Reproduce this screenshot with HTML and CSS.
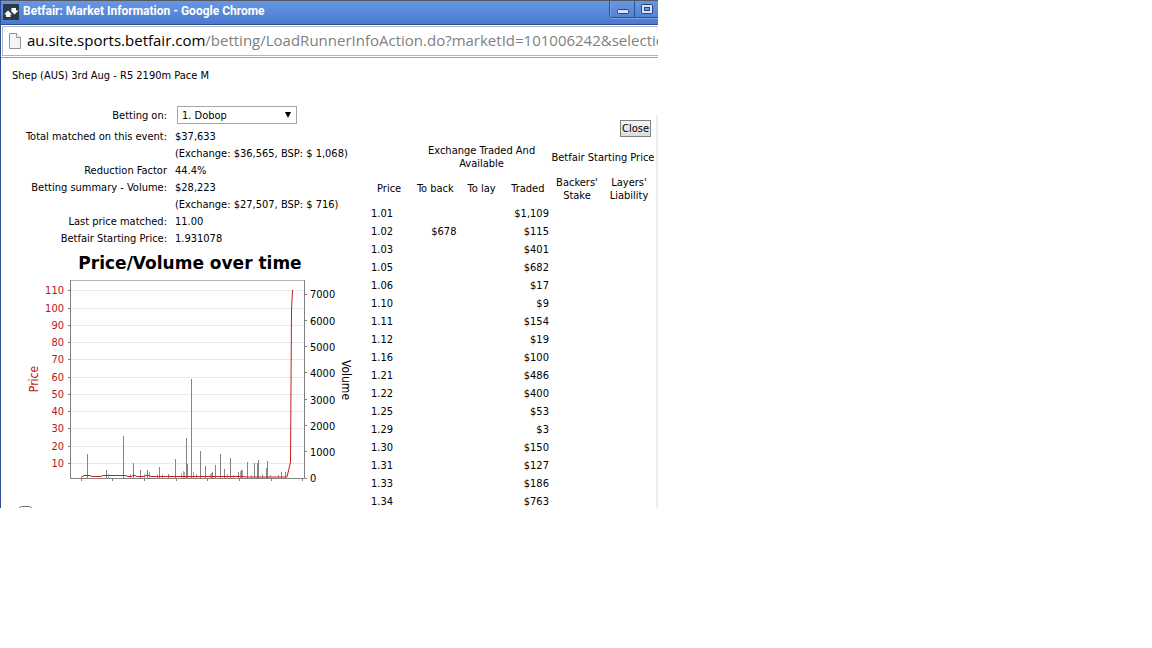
FILE: index.html
```html
<!DOCTYPE html>
<html lang="en">
<head>
<meta charset="utf-8">
<title>Betfair: Market Information</title>
<link rel="stylesheet" href="styles.css">
</head>
<body>
<div class="window">
  <header class="titlebar">
    <svg class="logo" viewBox="0 0 16 16" width="16" height="16" aria-hidden="true">
      <rect width="16" height="16" fill="#2a3a47"/>
      <path d="M1 10.500L5 6.500l4 4H7.500V13H3v-2.500z" fill="#fff"/>
      <path d="M8.500 4H13v2.500h2.500l-4 4-4-4h1z" fill="#fff"/>
    </svg>
    <h1 class="window-title">Betfair: Market Information - Google Chrome</h1>
    <div class="window-controls">
      <button class="control" type="button" aria-label="Minimise">
        <svg viewBox="0 0 12 10" width="12" height="10"><rect x=".5" y="5.5" width="11" height="4" rx="1" fill="#d5e2f8" stroke="#27457f"/></svg>
      </button>
      <button class="control" type="button" aria-label="Maximise">
        <svg viewBox="0 0 12 10" width="12" height="10"><rect x=".5" y=".5" width="11" height="9" rx="1" fill="#d5e2f8" stroke="#27457f"/><rect x="3.5" y="3.5" width="5" height="3" fill="#6c98e0" stroke="#27457f"/></svg>
      </button>
    </div>
  </header>
  <div class="addressbar">
    <svg class="page-icon" viewBox="0 0 12 16" width="12" height="16" aria-hidden="true">
      <path d="M.5.5h7l4 4v11H.5z" fill="#f5f5f5" stroke="#949494"/><path d="M7.500.5v4h4" fill="#fff" stroke="#949494"/>
    </svg>
    <span class="url"><span class="host">au.site.sports.betfair.com</span>/betting/LoadRunnerInfoAction.do?marketId=101006242&amp;selectio</span>
  </div>
  <main class="page">
    <p class="event">Shep (AUS) 3rd Aug - R5 2190m Pace M</p>
    <div class="columns">
      <section class="summary">
        <div class="runner">
          <label for="runner">Betting on:</label>
          <div class="select-wrap">
            <select id="runner"><option>1. Dobop</option></select>
            <svg class="arrow" viewBox="0 0 6 6" width="6" height="6" aria-hidden="true"><path d="M0 0h6L3 6z"/></svg>
          </div>
        </div>
        <dl class="facts">
          <dt>Total matched on this event:</dt><dd>$37,633</dd>
          <dd>(Exchange: $36,565, BSP: $ 1,068)</dd>
          <dt>Reduction Factor</dt><dd>44.4%</dd>
          <dt>Betting summary - Volume:</dt><dd>$28,223</dd>
          <dd>(Exchange: $27,507, BSP: $ 716)</dd>
          <dt>Last price matched:</dt><dd>11.00</dd>
          <dt>Betfair Starting Price:</dt><dd>1.931078</dd>
        </dl>
        <svg class="chart" viewBox="0 247 360 258" width="360" height="258" role="img" aria-label="Price and volume over time">
          <text class="chart-title" x="190" y="269">Price/Volume over time</text>
          <path class="grid" d="M71 290.500H304M71 308.500H304M71 325.500H304M71 342.500H304M71 359.500H304M71 377.500H304M71 394.500H304M71 411.500H304M71 428.500H304M71 446.500H304M71 463.500H304"/>
          <path class="bars" d="M87.500 478V454M106.500 478V470M123.500 478V436M133.500 478V463M140.500 478V470M147.500 478V470M159.500 478V467M168.500 478V474M175.500 478V459M186.500 478V438M187.500 478V464M191.500 478V379M200.500 478V451M205.500 478V466M212.500 478V472M215.500 478V465M220.500 478V454M224.500 478V469M230.500 478V458M238.500 478V472M241.500 478V470M247.500 478V462M254.500 478V463M257.500 478V463M258.500 478V460M266.500 478V468M267.500 478V461M281.500 478V472M285.500 478V472"/>
          <path class="bars small" d="M108.500 478V474M130.500 478V474M144.500 478V474M149.500 478V472M157.500 478V474M162.500 478V474M181.500 478V473M183.500 478V471M184.500 478V472M193.500 478V472M196.500 478V474M210.500 478V474M211.500 478V473M227.500 478V474M233.500 478V475M240.500 478V471M242.500 478V470M251.500 478V475M262.500 478V474M270.500 478V475M278.500 478V475"/>
          <path class="frame" d="M70.500 280.500H304.500"/>
          <path class="axis" d="M70.500 280V478.500H304.500V280M68 290.500H70M68 308.500H70M68 325.500H70M68 342.500H70M68 359.500H70M68 377.500H70M68 394.500H70M68 411.500H70M68 428.500H70M68 446.500H70M68 463.500H70M305 294.500H307M305 320.500H307M305 346.500H307M305 372.500H307M305 399.500H307M305 425.500H307M305 451.500H307M305 478.500H307M81.500 479V481M112.500 479V481M144.500 479V481M176.500 479V481M207.500 479V481M239.500 479V481M271.500 479V481M302.500 479V481"/>
          <path class="price-line" d="M81 477.500L84 475.500H90L92 476.500H101L103 475.500H125L128 476.500H131L133 475.500H135L137 476.500H144L146 475.500H149L151 476.500H243L246 477H287L290.500 462L291.500 310L292.500 290"/>
          <g class="ticks price">
            <text x="64" y="294">110</text><text x="64" y="312">100</text><text x="64" y="329">90</text><text x="64" y="346">80</text><text x="64" y="363">70</text><text x="64" y="381">60</text><text x="64" y="398">50</text><text x="64" y="415">40</text><text x="64" y="432">30</text><text x="64" y="450">20</text><text x="64" y="467">10</text>
          </g>
          <g class="ticks">
            <text x="310" y="298">7000</text><text x="310" y="325">6000</text><text x="310" y="351">5000</text><text x="310" y="377">4000</text><text x="310" y="404">3000</text><text x="310" y="430">2000</text><text x="310" y="456">1000</text><text x="310" y="482">0</text>
          </g>
          <text class="axis-name price" transform="translate(38 379) rotate(-90)">Price</text>
          <text class="axis-name" transform="translate(342 380) rotate(90)">Volume</text>
        </svg>
        <input class="option" type="checkbox" aria-label="Chart option">
      </section>
      <section class="prices">
        <button class="close" type="button">Close</button>
        <table>
          <colgroup><col class="narrow"><col class="narrow"><col class="narrow"><col class="narrow"><col><col></colgroup>
          <thead>
            <tr class="groups"><td></td><th colspan="3">Exchange Traded And Available</th><th colspan="2">Betfair Starting Price</th></tr>
            <tr class="heads"><th>Price</th><th>To back</th><th>To lay</th><th>Traded</th><th>Backers' Stake</th><th>Layers' Liability</th></tr>
          </thead>
          <tbody>
            <tr><td>1.01</td><td></td><td></td><td>$1,109</td><td></td><td></td></tr>
            <tr><td>1.02</td><td>$678</td><td></td><td>$115</td><td></td><td></td></tr>
            <tr><td>1.03</td><td></td><td></td><td>$401</td><td></td><td></td></tr>
            <tr><td>1.05</td><td></td><td></td><td>$682</td><td></td><td></td></tr>
            <tr><td>1.06</td><td></td><td></td><td>$17</td><td></td><td></td></tr>
            <tr><td>1.10</td><td></td><td></td><td>$9</td><td></td><td></td></tr>
            <tr><td>1.11</td><td></td><td></td><td>$154</td><td></td><td></td></tr>
            <tr><td>1.12</td><td></td><td></td><td>$19</td><td></td><td></td></tr>
            <tr><td>1.16</td><td></td><td></td><td>$100</td><td></td><td></td></tr>
            <tr><td>1.21</td><td></td><td></td><td>$486</td><td></td><td></td></tr>
            <tr><td>1.22</td><td></td><td></td><td>$400</td><td></td><td></td></tr>
            <tr><td>1.25</td><td></td><td></td><td>$53</td><td></td><td></td></tr>
            <tr><td>1.29</td><td></td><td></td><td>$3</td><td></td><td></td></tr>
            <tr><td>1.30</td><td></td><td></td><td>$150</td><td></td><td></td></tr>
            <tr><td>1.31</td><td></td><td></td><td>$127</td><td></td><td></td></tr>
            <tr><td>1.33</td><td></td><td></td><td>$186</td><td></td><td></td></tr>
            <tr><td>1.34</td><td></td><td></td><td>$763</td><td></td><td></td></tr>
          </tbody>
        </table>
      </section>
    </div>
  </main>
</div>
</body>
</html>
```
FILE: styles.css
```css
* { box-sizing: border-box; }

body {
  margin: 0;
  background: #fff;
  color: #000;
  font: 11px/17px "DejaVu Sans Condensed", "Noto Sans", sans-serif;
}

.window {
  max-width: 658px;
  max-height: 508px;
  overflow: hidden;
  border-left: 1px solid #2c4f93;
}

.titlebar {
  display: flex;
  align-items: center;
  height: 25px;
  padding-left: 2px;
  border-top: 1px solid #55585e;
  border-bottom: 1px solid #2c4f93;
  background: linear-gradient(#6697e3, #4b79cf);
}

.logo { flex: none; margin-top: -2px; }

.window-title {
  flex: 1;
  margin: 0 0 3px 4px;
  color: #fff;
  font: bold 12px/20px Roboto, sans-serif;
  white-space: nowrap;
}

.window-controls {
  display: flex;
  align-self: flex-start;
  border: 1px solid #2c5096;
  border-width: 0 0 1px 1px;
  border-radius: 0 0 0 3px;
  box-shadow: 0 1px #7ba3e6;
}

.control {
  display: flex;
  align-items: center;
  justify-content: center;
  width: 24px;
  height: 16px;
  padding: 0;
  border: 0;
  border-left: 1px solid #7ba3e6;
  background: none;
}

.control + .control { border-left-color: #2c5096; }

.addressbar {
  display: flex;
  align-items: center;
  gap: 6px;
  height: 30px;
  margin: 1px 0 1px 1px;
  padding-left: 6px;
  border: 1px solid #aeb3be;
  border-right: 0;
  overflow: hidden;
}

.page-icon { flex: none; }

.url {
  padding-bottom: 2px;
  color: #808080;
  font: 15px/24px "Open Sans", sans-serif;
  white-space: nowrap;
}

.host { color: #000; }

.page {
  padding-top: 9px;
  border-top: 1px solid #a0a0a4;
}

.event { margin: 0 11px 22px; }

.columns {
  display: flex;
  align-items: flex-start;
}

.summary { flex: 0 0 365px; }

.runner,
.facts {
  display: grid;
  grid-template-columns: 166px 1fr;
  column-gap: 8px;
  margin: 0;
}

.runner {
  align-items: center;
  margin-bottom: 4px;
  text-align: right;
}

.select-wrap {
  display: grid;
  align-items: center;
  width: 120px;
  margin-left: 2px;
}

.select-wrap > * { grid-area: 1 / 1; }

.arrow {
  justify-self: end;
  margin-right: 6px;
  pointer-events: none;
}

select {
  appearance: none;
  width: 100%;
  height: 18px;
  padding: 0 4px;
  border: 1px solid #a6a6a6;
  border-radius: 0;
  background: #fff;
  color: #000;
  font: inherit;
}

dt { grid-column: 1; text-align: right; }
dd { grid-column: 2; margin: 0; }

.chart {
  display: block;
  margin-left: -1px;
  font-family: "DejaVu Sans", sans-serif;
}

.chart-title { font-size: 17px; font-weight: bold; text-anchor: middle; }
.grid, .bars, .frame, .axis, .price-line { fill: none; stroke-width: 1px; }
.grid { stroke: #e2e2e2; stroke-dasharray: 3 1; }
.bars { stroke: #848484; }
.small { stroke: #aaa; }
.frame { stroke: #b5b5b5; }
.axis { stroke: #808080; }
.price-line { stroke: #c5201f; }
.ticks { font: 11px "DejaVu Sans Condensed", sans-serif; }
.axis-name { font: 12px "DejaVu Sans Condensed", sans-serif; text-anchor: middle; }
.price { fill: #b8141b; }
.ticks.price { text-anchor: end; }

.option {
  display: block;
  width: 13px;
  height: 13px;
  margin: 1px 0 0 18px;
}

.prices {
  flex: 1;
  margin-top: 9px;
  padding: 5px 1px 0 0;
  border-right: 2px solid #eee;
}

.close {
  display: block;
  height: 17px;
  margin: 0 4px 5px auto;
  padding: 0 1px;
  border: 1px solid #808080;
  background: linear-gradient(#f5f5f5, #dcdcdc);
  color: #000;
  font: inherit;
  line-height: 15px;
}

table {
  width: 100%;
  table-layout: fixed;
  border-collapse: collapse;
}

.narrow { width: 16%; }

th {
  padding: 0;
  font-weight: normal;
  line-height: 13px;
}

.groups { height: 30px; }
.groups th:last-child { white-space: nowrap; }
.heads { height: 33px; }

tbody td {
  height: 18px;
  padding: 0 2px;
  line-height: 18px;
  text-align: right;
}

tbody td:first-child { padding-left: 5px; text-align: left; }
```
